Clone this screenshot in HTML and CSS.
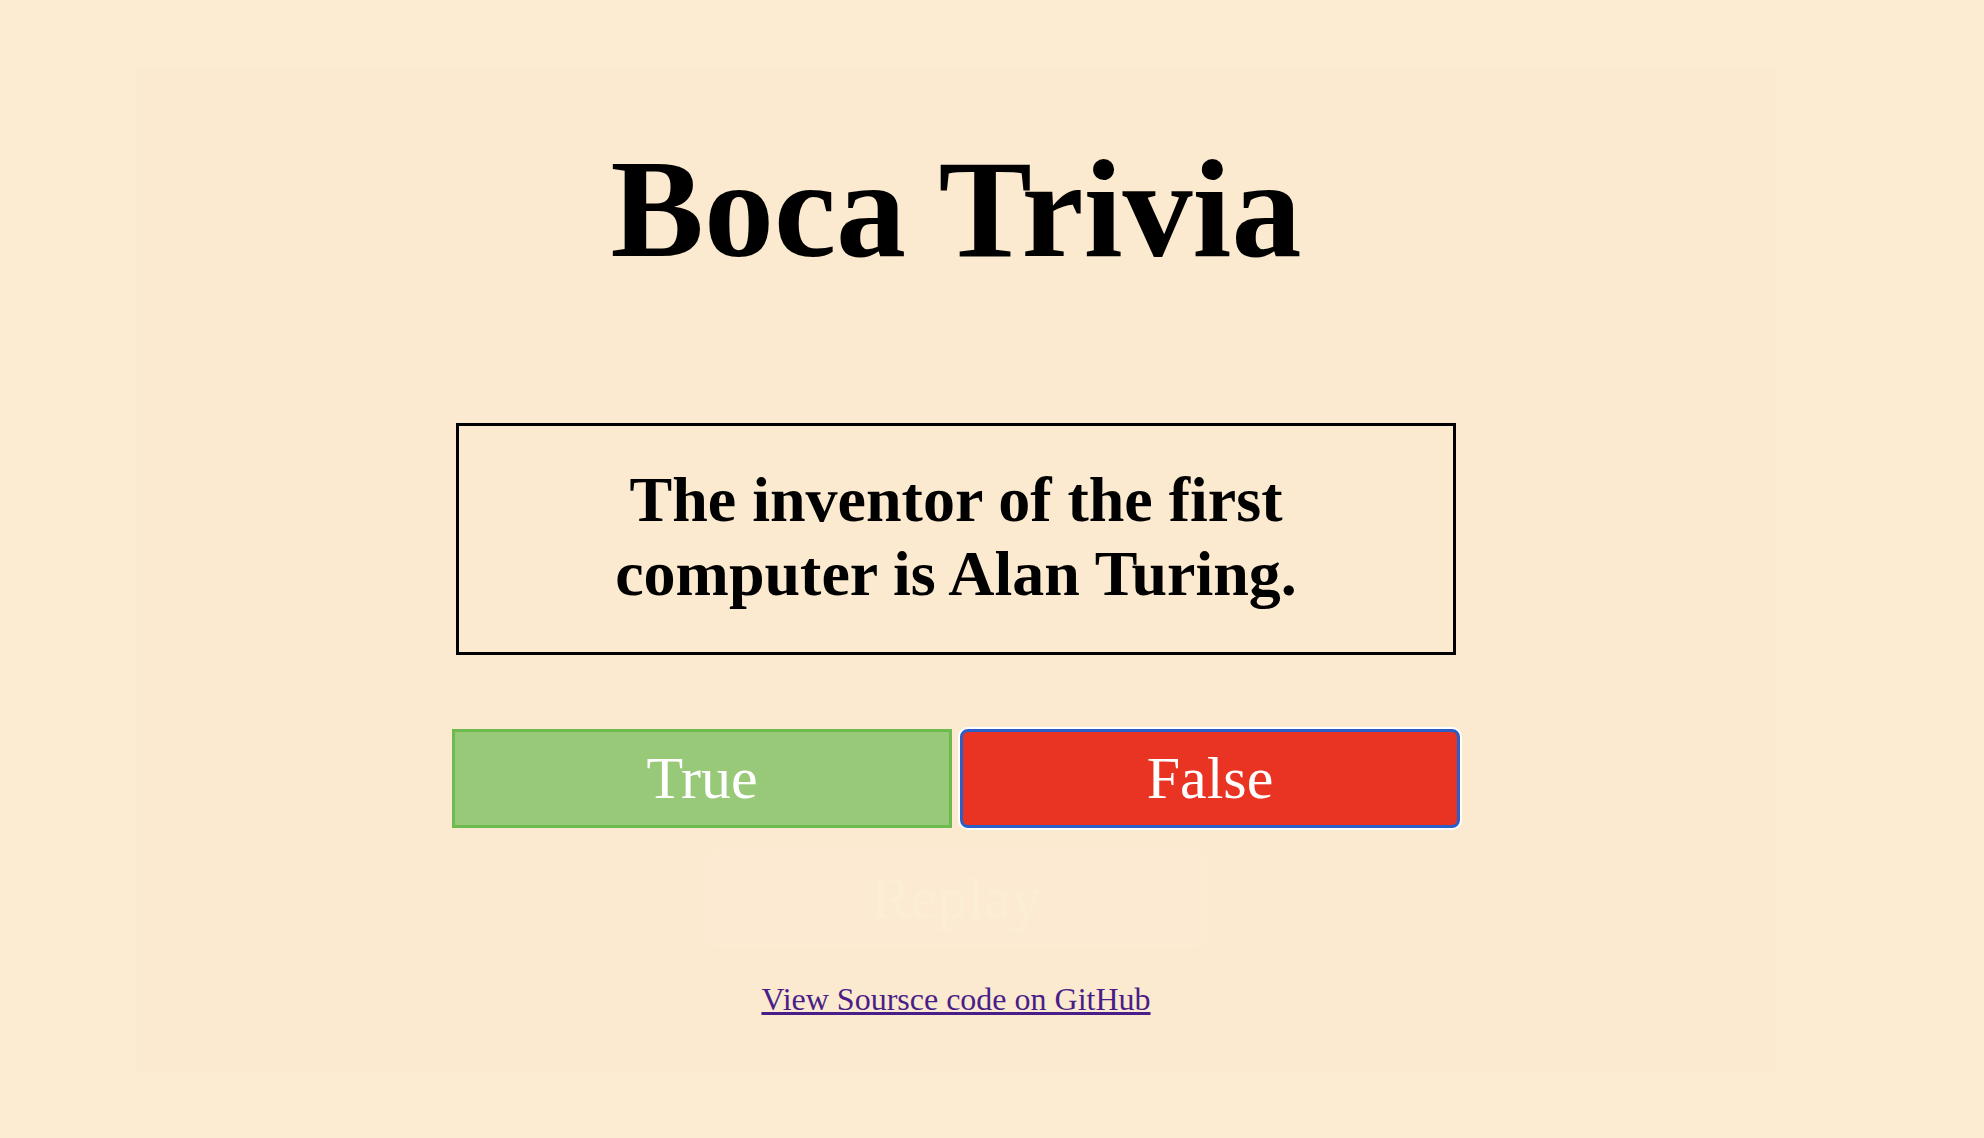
FILE: index.html
```html
<!DOCTYPE html>
<html lang="en">
<head>
<meta charset="utf-8">
<title>Boca Trivia</title>
<link rel="stylesheet" href="styles.css">
</head>
<body>
<div class="page">
  <main class="card">
    <h1 class="title">Boca Trivia</h1>
    <div class="question">
      <p class="question-text">The inventor of the first computer is Alan Turing.</p>
    </div>
    <div class="answers">
      <button class="btn btn-true" type="button">True</button>
      <button class="btn btn-false" type="button">False</button>
    </div>
    <button class="btn btn-replay" type="button">Replay</button>
    <a class="source-link" href="#">View Soursce code on GitHub</a>
  </main>
</div>
</body>
</html>
```
FILE: styles.css
```css
html, body {
  margin: 0;
  padding: 0;
}

body {
  background: #fcecd2;
  font-family: "Liberation Serif", "Times New Roman", serif;
  color: #000;
}

.page {
  min-height: 1138px;
  display: flex;
  align-items: center;
  padding-left: 136px;
  box-sizing: border-box;
}

.card {
  width: 1640px;
  height: 1004px;
  background: #fbeacf;
  box-sizing: border-box;
  padding-top: 61px;
  display: flex;
  flex-direction: column;
  align-items: center;
}

.title {
  margin: 0;
  font-size: 140px;
  font-weight: bold;
  line-height: normal;
}

.question {
  margin-top: 134px;
  width: 1000px;
  height: 232px;
  box-sizing: border-box;
  border: 3px solid #000;
  padding-top: 37px;
  display: flex;
  justify-content: center;
}

.question-text {
  margin: 0;
  width: 760px;
  font-size: 64px;
  font-weight: bold;
  text-align: center;
  line-height: normal;
}

.answers {
  margin-top: 74px;
  display: flex;
  gap: 8px;
}

.btn {
  width: 500px;
  height: 99px;
  box-sizing: border-box;
  font-family: "Liberation Serif", "Times New Roman", serif;
  font-size: 60px;
  color: #fff;
  padding: 0;
  margin: 0;
  cursor: pointer;
}

.btn-true {
  background: #98c978;
  border: 3px solid #6dba4e;
  border-radius: 0;
}

.btn-false {
  background: #e93323;
  border: 3px solid #2b5fc7;
  border-radius: 8px;
  box-shadow: 0 0 0 2px #fff;
}

.btn-replay {
  margin-top: 21px;
  background: #fcebd2;
  border: none;
  border-radius: 10px;
  color: #fcedd5;
}

.source-link {
  margin-top: 33px;
  font-size: 32px;
  color: #4a1e88;
  text-decoration: underline;
}
```
